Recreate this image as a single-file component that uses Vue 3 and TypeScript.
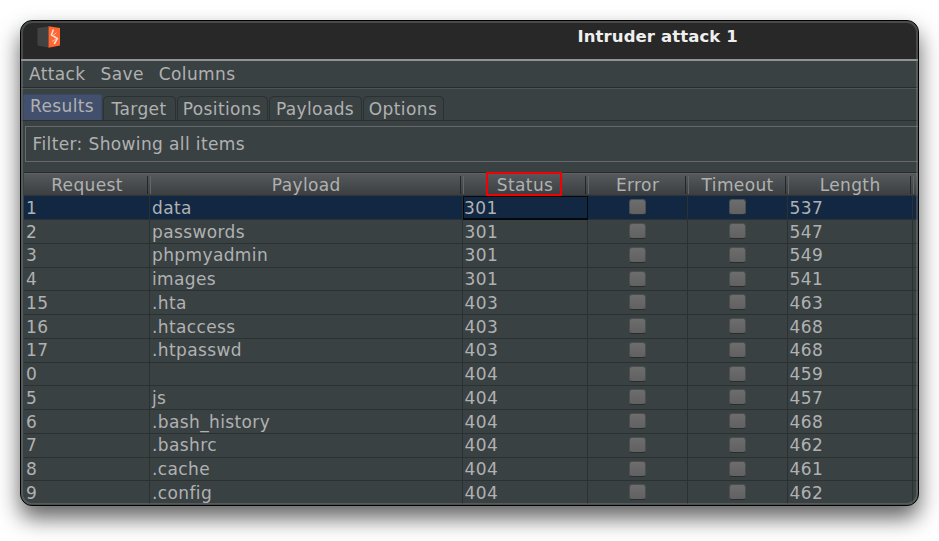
<script setup lang="ts">
interface AttackRow {
  request: number
  payload: string
  status: number
  length: number
}

const menus: string[] = ['Attack', 'Save', 'Columns']
const tabs: string[] = ['Results', 'Target', 'Positions', 'Payloads', 'Options']
const headers: string[] = ['Request', 'Payload', 'Status', 'Error', 'Timeout', 'Length']

const rows: AttackRow[] = [
  { request: 1, payload: 'data', status: 301, length: 537 },
  { request: 2, payload: 'passwords', status: 301, length: 547 },
  { request: 3, payload: 'phpmyadmin', status: 301, length: 549 },
  { request: 4, payload: 'images', status: 301, length: 541 },
  { request: 15, payload: '.hta', status: 403, length: 463 },
  { request: 16, payload: '.htaccess', status: 403, length: 468 },
  { request: 17, payload: '.htpasswd', status: 403, length: 468 },
  { request: 0, payload: '', status: 404, length: 459 },
  { request: 5, payload: 'js', status: 404, length: 457 },
  { request: 6, payload: '.bash_history', status: 404, length: 468 },
  { request: 7, payload: '.bashrc', status: 404, length: 462 },
  { request: 8, payload: '.cache', status: 404, length: 461 },
  { request: 9, payload: '.config', status: 404, length: 462 },
]
</script>

<template>
  <main class="desktop">
    <section class="window">
      <header class="titlebar">
        <svg class="logo" width="24" height="22" viewBox="0 0 24 22">
          <path d="M0.5 2 L11.5 0.5 V21.5 L0.5 19.5 Z" fill="#424243" />
          <path d="M11.5 0.3 L23 2 V19.5 L11.5 21.7 Z" fill="#ff6633" />
          <path d="M16.4 3.6 L14.4 9 L20.4 12.6 L17.2 18" fill="none" stroke="#ffe0d2" stroke-width="1.5" />
          <path d="M16 9.6 L19.4 6.8 M19 13 L15 15.6" fill="none" stroke="#ffbfa5" stroke-width="1" />
        </svg>
        <h1 class="title">Intruder attack 1</h1>
      </header>
      <nav class="menubar">
        <span v-for="m in menus" :key="m" class="menu">{{ m }}</span>
      </nav>
      <div class="tabs">
        <div v-for="(t, i) in tabs" :key="t" class="tab" :class="[t.toLowerCase(), { active: i === 0 }]">
          {{ t }}
        </div>
      </div>
      <div class="filter">Filter: Showing all items</div>
      <div class="table">
        <div class="grid head">
          <div v-for="h in headers" :key="h" class="th">
            <span class="label">{{ h }}</span>
            <i v-if="h === 'Status'" class="highlight"></i>
          </div>
          <div class="th"></div>
        </div>
        <div v-for="(r, i) in rows" :key="r.request" class="grid row" :class="{ selected: i === 0 }">
          <div class="td">{{ r.request }}</div>
          <div class="td">{{ r.payload }}</div>
          <div class="td" :class="{ focused: i === 0 }">{{ r.status }}</div>
          <div class="td center"><i class="check"></i></div>
          <div class="td center"><i class="check"></i></div>
          <div class="td">{{ r.length }}</div>
          <div class="td"></div>
        </div>
      </div>
    </section>
  </main>
</template>

<style>
body {
  margin: 0;
  background: #fff;
}
</style>

<style scoped>
* {
  box-sizing: border-box;
}
.desktop {
  height: 541px;
  padding: 20px;
  overflow: hidden;
  background: #fff;
}
.window {
  position: relative;
  display: flex;
  flex-direction: column;
  width: 899px;
  height: 486px;
  overflow: hidden;
  border: 1px solid #000;
  border-radius: 12px;
  background: #3a4143;
  box-shadow: 0 12px 22px rgba(0, 0, 0, 0.62);
  color: #b0b1b1;
  font: 17px/20px 'DejaVu Sans', sans-serif;
  letter-spacing: 0.38px;
  white-space: nowrap;
}
.window::after {
  content: '';
  position: absolute;
  inset: 0;
  border: 2px solid rgba(125, 133, 135, 0.38);
  border-radius: 11px;
  pointer-events: none;
}
.titlebar {
  display: flex;
  flex: none;
  height: 40px;
  padding: 5px 0 0 16px;
  border-bottom: 2px solid #929494;
  background: #282828;
}
.logo {
  flex: none;
}
.title {
  margin: 0 0 0 516.5px;
  color: #efefef;
  font-size: 16.5px;
  font-weight: bold;
  line-height: 21px;
  letter-spacing: 0.1px;
}
.menubar {
  display: flex;
  flex: none;
  gap: 15px;
  height: 27px;
  padding: 3px 0 0 8px;
  border-bottom: 1px solid #282c2d;
}
.tabs {
  display: flex;
  flex: none;
  height: 33px;
  padding: 5px 0 0 2px;
  border-top: 1px solid #505557;
  border-bottom: 1px solid #2b2f30;
}
.tab {
  height: 25px;
  margin-top: 2px;
  margin-right: 1px;
  padding: 2px 1px 0 0;
  border: 1px solid #2b3031;
  border-bottom: 0;
  border-radius: 5px 5px 0 0;
  text-align: center;
}
.tab.active {
  height: 26px;
  margin-top: 0;
  padding-top: 1px;
  border-color: #3a4867;
  border-radius: 2px 2px 0 0;
  background: #43506d;
}
.results { width: 79px; }
.target { width: 73px; }
.positions { width: 91px; }
.payloads { width: 93px; }
.options { width: 81px; }
.filter {
  flex: none;
  height: 36px;
  margin: 5px 0 10px 4px;
  padding: 7px 0 0 6.5px;
  border: 1px solid #65696b;
  border-right: 0;
}
.table {
  flex: none;
  margin-left: 3px;
  border-top: 1px solid #272b2c;
}
.grid {
  display: grid;
  grid-template-columns: 126px 312.6px 125px 100px 100px 125px 1fr;
}
.head {
  height: 23.4px;
  border-top: 1px solid #5d6163;
  border-bottom: 1px solid #303435;
  background: linear-gradient(#55595b, #3b3f41);
}
.th {
  position: relative;
  padding-top: 1px;
  text-align: center;
}
.th::after {
  content: '';
  position: absolute;
  top: 2px;
  right: -1px;
  width: 2px;
  height: 18px;
  border-left: 1px solid #252829;
  border-right: 1px solid #626668;
}
.highlight {
  position: absolute;
  top: -2px;
  left: 23px;
  width: 76px;
  height: 24px;
  border: 2px solid #f40000;
}
.row {
  height: 23.75px;
}
.td {
  padding: 1.5px 0 0 2px;
  border-right: 1px solid #2b3031;
  border-bottom: 1px solid #2b3031;
}
.th:last-child::after {
  display: none;
}
.td:last-child {
  border-right: 0;
}
.selected .td {
  background: #122742;
}
.selected .focused {
  padding: 0.5px 0 0 0.5px;
  border: 1px solid #05080c;
  border-bottom-width: 2px;
}
.center {
  display: flex;
  justify-content: center;
  padding: 3px 0 0;
}
.check {
  width: 17px;
  height: 16px;
  border: 1px solid #4c4e4f;
  border-bottom-color: #292d2e;
  border-radius: 3px;
  background: linear-gradient(#6d6d6d, #616161);
}
</style>
